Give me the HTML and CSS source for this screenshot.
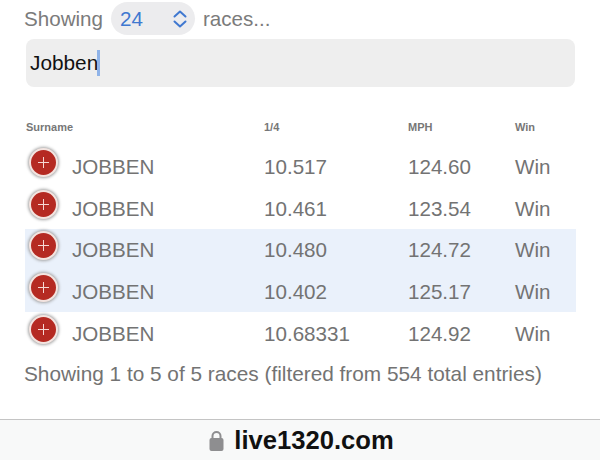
FILE: index.html
```html
<!DOCTYPE html>
<html lang="en">
<head>
    <meta charset="UTF-8">
    <title>Races</title>
    <link rel="stylesheet" href="styles.css">
</head>
<body>
    <div class="page">
        <div class="length-row">
            <span>Showing</span>
            <div class="pill">
                <span class="pill-value">24</span>
                <svg class="chevrons" width="16" height="20" viewBox="0 0 16 20">
                    <path d="M2.500 7.500 8 2.500l5.500 5M2.500 12.500 8 17.500l5.500-5" fill="none" stroke="#3f78d0" stroke-width="2" stroke-linecap="round" stroke-linejoin="round"/>
                </svg>
            </div>
            <span>races...</span>
        </div>
        <div class="search">
            <span>Jobben</span><span class="caret"></span>
        </div>

        <div class="row head">
            <div class="col-name">Surname</div>
            <div class="col-quarter">1/4</div>
            <div class="col-mph">MPH</div>
            <div class="col-win">Win</div>
        </div>

        <div class="row">
            <div class="col-name"><span class="plus"></span>JOBBEN</div>
            <div class="col-quarter">10.517</div>
            <div class="col-mph">124.60</div>
            <div class="col-win">Win</div>
        </div>
        <div class="row">
            <div class="col-name"><span class="plus"></span>JOBBEN</div>
            <div class="col-quarter">10.461</div>
            <div class="col-mph">123.54</div>
            <div class="col-win">Win</div>
        </div>
        <div class="row marked">
            <div class="col-name"><span class="plus"></span>JOBBEN</div>
            <div class="col-quarter">10.480</div>
            <div class="col-mph">124.72</div>
            <div class="col-win">Win</div>
        </div>
        <div class="row marked">
            <div class="col-name"><span class="plus"></span>JOBBEN</div>
            <div class="col-quarter">10.402</div>
            <div class="col-mph">125.17</div>
            <div class="col-win">Win</div>
        </div>
        <div class="row">
            <div class="col-name"><span class="plus"></span>JOBBEN</div>
            <div class="col-quarter">10.68331</div>
            <div class="col-mph">124.92</div>
            <div class="col-win">Win</div>
        </div>

        <div class="info">Showing 1 to 5 of 5 races (filtered from 554 total entries)</div>
    </div>

    <div class="address-bar">
        <svg width="15" height="20" viewBox="0 0 15 20">
            <path d="M3.500 8V5a4 4 0 0 1 8 0v3" fill="none" stroke="#8e8e90" stroke-width="2"/>
            <rect x="0.500" y="7" width="14" height="13" rx="2" fill="#8e8e90"/>
        </svg>
        <span>live1320.com</span>
    </div>
</body>
</html>
```

FILE: styles.css
```css
body {
    font-family: "Liberation Sans", Arial, sans-serif;
    margin: 0;
    height: 460px;
    display: flex;
    flex-direction: column;
    justify-content: space-between;
    overflow: hidden;
    background-color: #fff;
    color: #737373;
}

.page {
    padding: 2px 24px 0 24px;
}

.length-row {
    display: flex;
    align-items: center;
    height: 33px;
    font-size: 20.600px;
    color: #7b7b7b;
}

.pill {
    display: flex;
    align-items: center;
    justify-content: space-between;
    width: 84px;
    height: 33px;
    box-sizing: border-box;
    margin: 0 8px 0 8px;
    padding: 0 7px 0 9px;
    border-radius: 17px;
    background-color: #ececee;
}

.pill-value {
    color: #3f78d0;
}

.search {
    display: flex;
    align-items: center;
    height: 48px;
    margin: 4px 1px 0 2px;
    padding-left: 4px;
    border-radius: 8px;
    background-color: #eeeeee;
    font-size: 20.800px;
    color: #111;
}

.caret {
    width: 3px;
    height: 26px;
    margin-left: -1px;
    background-color: #8fb3e8;
}

.row {
    display: flex;
    align-items: center;
    height: 41.600px;
    box-sizing: border-box;
    padding: 1px 0 0 1px;
    margin-left: 1px;
    font-size: 20.600px;
}

.row.head {
    height: 20px;
    margin-top: 30px;
    margin-bottom: 9px;
    padding-top: 0;
    font-size: 11px;
    font-weight: bold;
    color: #777;
}

.row.marked {
    background-color: #eaf1fb;
}

.col-name {
    display: flex;
    align-items: center;
    width: 238px;
}

.col-quarter {
    width: 144px;
}

.col-mph {
    width: 107px;
}

.plus {
    position: relative;
    flex: none;
    width: 29px;
    height: 29px;
    margin: -9px 14px 0 3px;
    border: 2px solid #f3e4e0;
    border-radius: 50%;
    box-sizing: border-box;
    background-color: #b52a22;
    box-shadow: 0 0 3px 1px #a5a5a5;
}

.plus::before,
.plus::after {
    content: "";
    position: absolute;
    left: 7px;
    top: 12px;
    width: 11px;
    height: 1px;
    background-color: #f6d8d4;
}

.plus::after {
    transform: rotate(90deg);
}

.info {
    margin-top: 8px;
    font-size: 20.800px;
    color: #737373;
}

.address-bar {
    display: flex;
    align-items: center;
    justify-content: center;
    gap: 10px;
    height: 41px;
    box-sizing: border-box;
    padding: 1px 0 0 3px;
    border-top: 1px solid #c4c4c4;
    background-color: #f8f9f9;
    font-size: 25.600px;
    font-weight: bold;
    color: #111;
}
```
